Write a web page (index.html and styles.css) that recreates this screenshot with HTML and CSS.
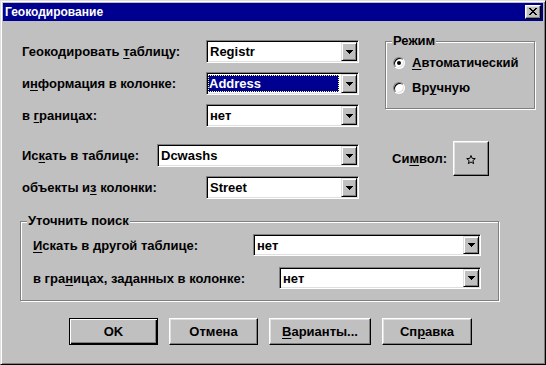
FILE: index.html
```html
<!DOCTYPE html>
<html lang="ru">
<head>
<meta charset="utf-8">
<title>Геокодирование</title>
<link rel="stylesheet" href="styles.css">
</head>
<body>
<div class="window">
  <div class="titlebar">
    <span class="title">Геокодирование</span>
    <span class="close">
      <svg width="8" height="7" viewBox="0 0 8 7" shape-rendering="crispEdges"><path fill="#000" d="M0 0h2v1H0zM6 0h2v1H6zM1 1h2v1H1zM5 1h2v1H5zM2 2h4v1H2zM3 3h2v1H3zM2 4h4v1H2zM1 5h2v1H1zM5 5h2v1H5zM0 6h2v1H0zM6 6h2v1H6z"/></svg>
    </span>
  </div>
  <div class="content">
    <div class="top">
      <div class="left">
        <div class="row">
          <span class="lbl w184">Геокодировать <u>т</u>аблицу:</span>
          <div class="combo w153"><span class="val">Registr</span><span class="drop"><svg width="7" height="4" viewBox="0 0 7 4" shape-rendering="crispEdges"><path d="M0 0h7v1H0zM1 1h5v1H1zM2 2h3v1H2zM3 3h1v1H3z"/></svg></span></div>
        </div>
        <div class="row">
          <span class="lbl w184">и<u>н</u>формация в колонке:</span>
          <div class="combo w153"><span class="val sel"><span class="hl">Address</span></span><span class="drop"><svg width="7" height="4" viewBox="0 0 7 4" shape-rendering="crispEdges"><path d="M0 0h7v1H0zM1 1h5v1H1zM2 2h3v1H2zM3 3h1v1H3z"/></svg></span></div>
        </div>
        <div class="row">
          <span class="lbl w184">в <u>г</u>раницах:</span>
          <div class="combo w153"><span class="val">нет</span><span class="drop"><svg width="7" height="4" viewBox="0 0 7 4" shape-rendering="crispEdges"><path d="M0 0h7v1H0zM1 1h5v1H1zM2 2h3v1H2zM3 3h1v1H3z"/></svg></span></div>
        </div>
        <div class="row sep">
          <span class="lbl w135">Ис<u>к</u>ать в таблице:</span>
          <div class="combo w202"><span class="val">Dcwashs</span><span class="drop"><svg width="7" height="4" viewBox="0 0 7 4" shape-rendering="crispEdges"><path d="M0 0h7v1H0zM1 1h5v1H1zM2 2h3v1H2zM3 3h1v1H3z"/></svg></span></div>
        </div>
        <div class="row">
          <span class="lbl w184">объекты и<u>з</u> колонки:</span>
          <div class="combo w153"><span class="val">Street</span><span class="drop"><svg width="7" height="4" viewBox="0 0 7 4" shape-rendering="crispEdges"><path d="M0 0h7v1H0zM1 1h5v1H1zM2 2h3v1H2zM3 3h1v1H3z"/></svg></span></div>
        </div>
      </div>
      <div class="right">
        <div class="group mode">
          <div class="cap">Режим</div>
          <div class="radio-row"><span class="radio"><span class="dot"></span></span><span><u>А</u>втоматический</span></div>
          <div class="radio-row"><span class="radio"></span><span>Вр<u>у</u>чную</span></div>
        </div>
        <div class="symrow">
          <span class="symlbl">Си<u>м</u>вол:</span>
          <span class="btn symbtn"><svg width="10" height="10" viewBox="0 0 10 10"><polygon points="5,0.5 6.18,3.38 9.28,3.61 6.9,5.62 7.65,8.64 5,7 2.35,8.64 3.1,5.62 0.72,3.61 3.82,3.38" fill="none" stroke="#000" stroke-width="1"/></svg></span>
        </div>
      </div>
    </div>
    <div class="group refine">
      <div class="cap">Уточнить поиск</div>
      <div class="row r2 first">
        <span class="lbl w220"><u>И</u>скать в другой таблице:</span>
        <div class="combo w228 h22"><span class="val">нет</span><span class="drop"><svg width="7" height="4" viewBox="0 0 7 4" shape-rendering="crispEdges"><path d="M0 0h7v1H0zM1 1h5v1H1zM2 2h3v1H2zM3 3h1v1H3z"/></svg></span></div>
      </div>
      <div class="row r2">
        <span class="lbl w246">в гра<u>н</u>ицах, заданных в колонке:</span>
        <div class="combo w202 h22"><span class="val">нет</span><span class="drop"><svg width="7" height="4" viewBox="0 0 7 4" shape-rendering="crispEdges"><path d="M0 0h7v1H0zM1 1h5v1H1zM2 2h3v1H2zM3 3h1v1H3z"/></svg></span></div>
      </div>
    </div>
    <div class="buttons">
      <span class="btn default b89">OK</span>
      <span class="btn b89">Отмена</span>
      <span class="btn b102"><u>В</u>арианты...</span>
      <span class="btn b90">Сп<u>р</u>авка</span>
    </div>
  </div>
</div>
</body>
</html>
```

FILE: styles.css
```css
* { box-sizing: border-box; }
html, body { margin: 0; padding: 0; }
body {
  width: 546px;
  height: 365px;
  overflow: hidden;
  background: #c0c0c0;
  font-family: "Liberation Sans", Arial, sans-serif;
  font-size: 13px;
  font-weight: bold;
  color: #000;
}
u {
  text-decoration-thickness: 1px;
  text-underline-offset: 2px;
}
.window {
  width: 546px;
  height: 365px;
  background: #c0c0c0;
  border: 1px solid;
  border-color: #dfdfdf #000 #000 #dfdfdf;
  box-shadow: inset 1px 1px 0 #fff, inset -1px -1px 0 #808080;
  padding: 2px;
  display: flex;
  flex-direction: column;
}
.titlebar {
  height: 18px;
  flex: none;
  background: #000090;
  color: #fff;
  display: flex;
  align-items: center;
  justify-content: space-between;
  padding: 0 2px 0 2px;
}
.title {
  font-size: 12px;
  font-weight: bold;
  line-height: 14px;
}
.close {
  width: 16px;
  height: 14px;
  background: #c0c0c0;
  border: 1px solid;
  border-color: #fff #000 #000 #fff;
  box-shadow: inset -1px -1px 0 #808080, inset 1px 1px 0 #dfdfdf;
  display: flex;
  align-items: center;
  justify-content: center;
  padding-bottom: 1px;
}
.content {
  flex: 1;
  padding: 12px 0 0 19px;
  display: flex;
  flex-direction: column;
}
.top {
  display: flex;
}
.left {
  width: 337px;
  padding-top: 7px;
  display: flex;
  flex-direction: column;
}
.row {
  display: flex;
  align-items: center;
  height: 23px;
}
.row + .row { margin-top: 9px; }
.row.sep { margin-top: 17px; }
.lbl {
  flex: none;
  white-space: nowrap;
}
.w184 { width: 184px; }
.w135 { width: 135px; }
.w220 { width: 220px; }
.w246 { width: 246px; }
.combo {
  flex: none;
  height: 23px;
  display: flex;
  background: #fff;
  border: 1px solid;
  border-color: #808080 #fff #fff #808080;
  box-shadow: inset 1px 1px 0 #000, inset -1px -1px 0 #dfdfdf;
  padding: 1px;
}
.combo.h22 { height: 22px; }
.w153 { width: 153px; }
.w202 { width: 202px; }
.w228 { width: 228px; }
.val {
  flex: 1;
  display: flex;
  align-items: center;
  padding-left: 2px;
  white-space: nowrap;
}
.val.sel {
  padding: 1px 2px 1px 0;
}
.hl {
  flex: 1;
  align-self: stretch;
  display: flex;
  align-items: center;
  background: #000090;
  color: #fff;
  border: 1px dotted #ffff80;
  padding-left: 0;
}
.drop {
  flex: none;
  width: 16px;
  background: #c0c0c0;
  border: 1px solid;
  border-color: #dfdfdf #000 #000 #dfdfdf;
  box-shadow: inset 1px 1px 0 #fff, inset -1px -1px 0 #808080;
  display: flex;
  align-items: center;
  justify-content: center;
}
.right {
  margin-left: 26px;
  width: 150px;
}
.group {
  border: 1px solid #808080;
  box-shadow: inset 1px 1px 0 #fff, 1px 1px 0 #fff;
}
.cap {
  width: fit-content;
  margin: -9px 0 0 6px;
  padding: 0 1px;
  line-height: 16px;
  background: #c0c0c0;
}
.mode {
  margin-top: 8px;
  padding: 0 0 8px 7px;
}
.mode .cap { margin-left: -1px; }
.mode .cap + .radio-row { margin-top: 1px; }
.radio-row {
  display: flex;
  align-items: center;
  height: 25px;
}
.radio {
  width: 12px;
  height: 12px;
  border-radius: 50%;
  background: #fff;
  border: 1px solid;
  border-color: #808080 #fff #fff #808080;
  box-shadow: inset 1px 1px 0 #000, inset -1px -1px 0 #dfdfdf;
  margin-right: 7px;
  display: flex;
  align-items: center;
  justify-content: center;
}
.dot {
  width: 4px;
  height: 4px;
  border-radius: 50%;
  background: #000;
}
.symrow {
  margin-top: 32px;
  display: flex;
  align-items: center;
  padding-left: 7px;
}
.symlbl {
  width: 61px;
}
.btn {
  display: flex;
  align-items: center;
  justify-content: center;
  background: #c0c0c0;
  border: 1px solid;
  border-color: #fff #000 #000 #fff;
  box-shadow: inset -1px -1px 0 #808080, inset 1px 1px 0 #dfdfdf;
  white-space: nowrap;
}
.symbtn {
  width: 36px;
  height: 35px;
  padding-top: 3px;
}
.refine {
  margin: 22px 0 0 -2px;
  width: 479px;
  padding: 0 0 11px 12px;
}
.refine .cap { margin-left: -6px; }
.row.r2 { height: 22px; }
.row.r2.first { margin-top: 5px; }
.row.r2 + .row.r2 { margin-top: 11px; }
.buttons {
  margin: 17px 0 0 47px;
  display: flex;
  gap: 11px;
}
.buttons .btn { height: 27px; }
.b89 { width: 89px; }
.b90 { width: 90px; }
.b102 { width: 102px; }
.btn.default {
  border: 1px solid #000;
  box-shadow: inset 1px 1px 0 #fff, inset -1px -1px 0 #000, inset -2px -2px 0 #808080;
}
```
